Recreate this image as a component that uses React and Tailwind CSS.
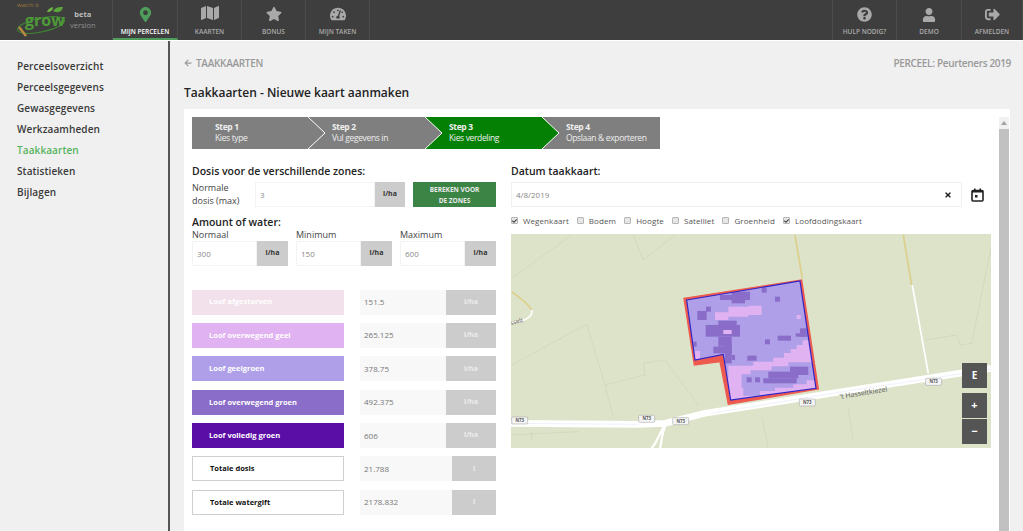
import { FaMapMarkerAlt, FaMap, FaStar, FaTachometerAlt, FaQuestionCircle, FaUser, FaSignOutAlt, FaArrowLeft, FaTimes, FaCheck } from 'react-icons/fa'

const leftNav = [
  { label: 'MIJN PERCELEN', icon: FaMapMarkerAlt, size: 15, active: true, w: 'w-[65px]' },
  { label: 'KAARTEN', icon: FaMap, size: 18, w: 'w-[64px]' },
  { label: 'BONUS', icon: FaStar, size: 16, w: 'w-[64px]' },
  { label: 'MIJN TAKEN', icon: FaTachometerAlt, size: 16, w: 'w-[64px]' },
]

const rightNav = [
  { label: 'HULP NODIG?', icon: FaQuestionCircle, size: 15, w: 'w-[64px]' },
  { label: 'DEMO', icon: FaUser, size: 14, w: 'w-[65px]' },
  { label: 'AFMELDEN', icon: FaSignOutAlt, size: 15, w: 'w-[61px]' },
]

const sideItems = ['Perceelsoverzicht', 'Perceelsgegevens', 'Gewasgegevens', 'Werkzaamheden', 'Taakkaarten', 'Statistieken', 'Bijlagen']

const steps = [
  { title: 'Step 1', text: 'Kies type', bg: 'bg-[#7f7f7f]', fill: '#7f7f7f' },
  { title: 'Step 2', text: 'Vul gegevens in', bg: 'bg-[#7f7f7f]', fill: '#7f7f7f' },
  { title: 'Step 3', text: 'Kies verdeling', bg: 'bg-[#048004]', fill: '#048004' },
  { title: 'Step 4', text: 'Opslaan & exporteren', bg: 'bg-[#7f7f7f]' },
]

const zones = [
  { label: 'Loof afgestorven', value: '151.5', color: 'bg-[#f2e0ea]', unit: 'l/ha' },
  { label: 'Loof overwegend geel', value: '265.125', color: 'bg-[#e0b2f2]', unit: 'l/ha' },
  { label: 'Loof geelgroen', value: '378.75', color: 'bg-[#ae9fe8]', unit: 'l/ha' },
  { label: 'Loof overwegend groen', value: '492.375', color: 'bg-[#8a6cc9]', unit: 'l/ha' },
  { label: 'Loof volledig groen', value: '606', color: 'bg-[#5b0ea6]', unit: 'l/ha' },
]

const layers = [
  { label: 'Wegenkaart', on: true },
  { label: 'Bodem' },
  { label: 'Hoogte' },
  { label: 'Satelliet' },
  { label: 'Groenheid' },
  { label: 'Loofdodingskaart', on: true },
]

function NavItem({ item }) {
  const Icon = item.icon
  return (
    <div className={`${item.w} h-full flex flex-col items-center border-r border-[#4c4c4c] ${item.active ? 'border-b-2 border-b-[#4f9d5a]' : ''}`}>
      <div className="h-[22px] flex items-end">
        <Icon size={item.size} className={item.active ? 'text-[#4f9d5a]' : 'text-[#a9a9a9]'} />
      </div>
      <span className={`mt-[5px] text-[6.5px] font-semibold leading-[9px] whitespace-nowrap ${item.active ? 'text-white' : 'text-[#a9a9a9]'}`}>{item.label}</span>
    </div>
  )
}

function Logo() {
  return (
    <div className="w-[113px] h-full flex items-center border-r border-[#4c4c4c] pl-[15px]">
      <div className="relative w-[52px] h-[36px]">
        <svg width="52" height="36" viewBox="0 0 52 36" className="absolute left-0 top-0">
          <ellipse cx="26" cy="23" rx="24" ry="7" fill="none" stroke="#3f8a35" strokeWidth="1" transform="rotate(-12 26 23)" />
          <path d="M38 9c3-4 6-4 10-4-1 4-4 7-10 4z" fill="#5aa53c" />
          <path d="M32 10c1-3 3-4 6-5 0 3-2 5-6 5z" fill="#6fb544" />
          <path d="M4 25l7 9" stroke="#b98a3f" strokeWidth="2.5" />
        </svg>
        <span className="absolute left-[2px] top-[-1px] text-[6px] leading-[8px] text-[#9c7a3a]">watch it</span>
        <span className="absolute left-[10px] top-[10px] text-[16px] leading-[16px] font-bold text-[#4e9a38]">grow</span>
      </div>
      <div className="ml-[3px] flex flex-col items-center text-[7.5px] leading-[11px]">
        <span className="font-bold text-[#bdbdbd]">beta</span>
        <span className="text-[#8f8f8f]">version</span>
      </div>
    </div>
  )
}

function Input({ value, unit, inputW, unitW }) {
  return (
    <div className="flex h-[25px]">
      <div className={`${inputW} border border-[#f3f3f3] flex items-center pl-[4px] text-[8px] text-[#8a8a8a]`}>{value}</div>
      <div className={`${unitW} bg-[#cccccc] flex items-center justify-center text-[7px] font-bold text-[#333]`}>{unit}</div>
    </div>
  )
}

function ZoneRow({ label, value, unit, color, total }) {
  return (
    <div className="flex h-[25px] mb-[8.4px]">
      <div className={`w-[152px] flex items-center pl-[17px] text-[7.5px] font-bold ${total ? 'bg-white border border-[#cfcfcf] text-[#111]' : `${color} text-white`}`}>{label}</div>
      <div className={`ml-[16px] ${total ? 'w-[92px]' : 'w-[86px]'} bg-[#f8f8f8] flex items-center pl-[4px] text-[8px] text-[#777]`}>{value}</div>
      <div className={`${total ? 'w-[44px]' : 'w-[50px]'} bg-[#cccccc] flex items-center justify-center text-[7px] font-bold text-[#ececec]`}>{unit}</div>
    </div>
  )
}

function Shield({ x, y }) {
  return (
    <g>
      <rect x={x} y={y} width="48" height="21" rx="3" fill="#f4f4f4" stroke="#9a9a9a" strokeWidth="1.5" />
      <text x={x + 24} y={y + 15} textAnchor="middle" fontSize="13" fontWeight="700" fill="#555">N73</text>
    </g>
  )
}

function MapSvg() {
  const dark = [
    [180, 90, 90, 15], [215, 80, 55, 15], [215, 100, 40, 15], [305, 68, 15, 15], [345, 95, 15, 15],
    [112, 138, 28, 27], [138, 125, 15, 15], [137, 180, 103, 35], [175, 167, 55, 15], [175, 215, 40, 30],
    [160, 245, 55, 20], [195, 235, 20, 60], [215, 270, 10, 15], [100, 230, 10, 15], [315, 223, 15, 15],
    [353, 212, 40, 15], [262, 272, 28, 15], [407, 205, 35, 10], [420, 190, 20, 25],
    [260, 337, 15, 15], [285, 337, 15, 15], [310, 340, 100, 15], [325, 320, 90, 20], [390, 305, 55, 25],
  ]
  const outline = '80,105 420,48 468,370 212,405 190,268 105,285'
  return (
    <svg viewBox="511 234 480 214" className="w-full h-full block">
      <rect x="511" y="234" width="480" height="214" fill="#dde3c9" />
      {/* roads and field lines, coords taken from the 3x crop */}
      <g transform="translate(505 235) scale(.3333)">
        <g fill="none" stroke="#cdd5b4" strokeWidth="2">
          <path d="M20 390 L245 268 L300 450 L420 420 L415 385 L480 375 L580 510" />
          <path d="M20 130 L200 0 M385 0 L415 75 L510 0" />
          <path d="M1260 315 L1355 300 L1365 330 L1400 325 L1458 40" />
          <path d="M300 450 L325 550 M770 540 L790 640 M1030 520 L1045 620" />
          <path d="M20 600 L220 590 M80 615 L80 590" />
        </g>
        <path d="M870 0 L892 130 M1195 0 L1220 150" fill="none" stroke="#dccf8a" strokeWidth="5" />
        <path d="M20 170 C45 190 70 205 80 225" fill="none" stroke="#dccf8a" strokeWidth="5" />
        <path d="M1222 150 L1270 415" fill="none" stroke="#ffffff" strokeWidth="5" />
        <path d="M20 262 C60 260 85 245 80 225" fill="none" stroke="#ffffff" strokeWidth="5" />
        <path d="M18 565 L400 568 L480 565 L600 535 L1000 472 L1458 400" fill="none" stroke="#ffffff" strokeWidth="20" />
        <path d="M18 565 L400 568 M620 535 L1000 472 L1458 403" fill="none" stroke="#dfe2ee" strokeWidth="1.5" />
        <path d="M480 570 C465 590 460 615 440 640 M480 575 C470 600 470 620 465 640" fill="none" stroke="#ffffff" strokeWidth="7" />
        <Shield x={20} y={546} />
        <Shield x={401} y={541} />
        <Shield x={503} y={548} />
        <Shield x={883} y={492} />
        <Shield x={1262} y={430} />
        <text x="1005" y="492" fontSize="21" fill="#555" transform="rotate(-9 1005 492)">'t Hasseltkiezel</text>
        <text x="18" y="270" fontSize="18" fill="#555" transform="rotate(-14 18 270)">sselt</text>
      </g>
      {/* field with zones, coords from the other crop */}
      <g transform="translate(660 265) scale(.3333)">
        <clipPath id="field">
          <polygon points={outline} />
        </clipPath>
        <polygon points="72,100 425,45 475,372 205,418 180,290 103,300" fill="#ee5a4f" stroke="#ee5a4f" strokeWidth="4" />
        <polygon points={outline} fill="#ae9fe8" />
        <g clipPath="url(#field)">
          <polygon points="205,302 280,302 280,290 340,290 340,278 372,278 372,264 392,264 392,252 410,252 410,240 428,240 428,226 445,226 480,226 480,420 205,420" fill="#e0b2f2" />
          <polygon points="272,328 272,316 335,316 335,304 385,304 385,292 470,292 470,346 440,346 440,358 400,358 400,368 345,368 345,378 300,378 300,392 250,392 250,368 245,368 245,328" fill="#ae9fe8" />
          <polygon points="165,165 165,142 205,142 205,125 265,125 265,122 305,122 305,150 265,150 265,155 205,155 205,165" fill="#e0b2f2" />
          {dark.map(([x, y, w, h], i) => (
            <rect key={i} x={x} y={y} width={w} height={h} fill="#8a6cc9" />
          ))}
          <rect x="410" y="150" width="12" height="12" fill="#e0b2f2" />
          <rect x="190" y="195" width="25" height="12" fill="#e0b2f2" />
          <rect x="105" y="258" width="15" height="25" fill="#e0b2f2" />
        </g>
        <polygon points={outline} fill="none" stroke="#2c24c8" strokeWidth="3.5" />
      </g>
    </svg>
  )
}

export default function App() {
  return (
    <div className="w-[1023px] h-[531px] overflow-hidden bg-[#f0f0f0] text-[#333] font-['Open_Sans',sans-serif]">
      <header className="h-[41px] bg-[#3e3e3e] border-b border-white flex justify-between">
        <div className="flex h-full">
          <Logo />
          {leftNav.map(item => <NavItem key={item.label} item={item} />)}
        </div>
        <div className="flex h-full border-l border-[#4c4c4c]">
          {rightNav.map(item => <NavItem key={item.label} item={item} />)}
        </div>
      </header>

      <div className="flex h-[490px]">
        <aside className="w-[170px] shrink-0 border-r-2 border-[#555] pt-[15px] pl-[17px]">
          {sideItems.map(item => (
            <div key={item} className={`h-[21px] flex items-center text-[10px] font-semibold tracking-[0.1px] ${item === 'Taakkaarten' ? 'text-[#55b35b]' : 'text-[#3a3a3a]'}`}>{item}</div>
          ))}
        </aside>

        <main className="w-[853px] pl-[14px] pr-[12px]">
          <div className="h-[68px] relative">
            <div className="flex justify-between items-center h-[44px]">
              <div className="flex items-center gap-[4px] text-[10px] font-semibold tracking-[-0.3px] text-[#999]">
                <FaArrowLeft size={8} />
                <span>TAAKKAARTEN</span>
              </div>
              <span className="text-[10px] font-semibold tracking-[-0.33px] text-[#999]">PERCEEL: Peurteners 2019</span>
            </div>
            <h1 className="text-[12px] font-semibold leading-[18px] text-[#222] mt-[-1px]">Taakkaarten - Nieuwe kaart aanmaken</h1>
          </div>

          <section className="h-[422px] w-[826px] bg-white flex pl-[8px] pt-[8px] relative">
            <div className="w-[807px]">
              <div className="flex w-[468px] h-[32px]">
                {steps.map(s => (
                  <div key={s.title} className={`${s.bg} relative flex-1 pl-[23px] pt-[4px] text-[8.5px] leading-[11px] tracking-[-0.35px] text-[#eeeeee]`}>
                    <div className="font-bold">{s.title}</div>
                    <div className="whitespace-nowrap">{s.text}</div>
                    {s.fill && (
                      <svg width="18" height="32" viewBox="0 0 18 32" className="absolute top-0 right-[-17px] z-10">
                        <polygon points="0,0 17,16 0,32" fill={s.fill} />
                        <polyline points="0,0 17,16 0,32" fill="none" stroke="#ffffff" strokeWidth="1" />
                      </svg>
                    )}
                  </div>
                ))}
              </div>

              <div className="flex mt-[15px]">
                <div className="w-[304px]">
                  <h2 className="text-[10.5px] font-semibold leading-[14px] text-[#222] mb-[4px]">Dosis voor de verschillende zones:</h2>
                  <div className="flex">
                    <div className="w-[63px] text-[9px] leading-[12.5px] text-[#444]">Normale<br />dosis (max)</div>
                    <Input value="3" unit="l/ha" inputW="w-[120px]" unitW="w-[30px]" />
                    <div className="ml-[8px] w-[83px] h-[25px] bg-[#3c8445] flex items-center justify-center text-center text-[6.5px] leading-[11px] font-bold text-[#eaeaea]">BEREKEN VOOR<br />DE ZONES</div>
                  </div>
                  <h2 className="mt-[8px] text-[10.5px] font-semibold leading-[14px] text-[#222]">Amount of water:</h2>
                  <div className="flex gap-[8px]">
                    {[['Normaal', '300'], ['Minimum', '150'], ['Maximum', '600']].map(([label, value]) => (
                      <div key={label}>
                        <div className="text-[9px] leading-[12px] text-[#444]">{label}</div>
                        <Input value={value} unit="l/ha" inputW="w-[65px]" unitW="w-[31px]" />
                      </div>
                    ))}
                  </div>
                  <div className="mt-[23.5px]">
                    {zones.map(z => <ZoneRow key={z.label} {...z} />)}
                    <ZoneRow label="Totale dosis" value="21.788" unit="l" total />
                    <ZoneRow label="Totale watergift" value="2178.832" unit="l" total />
                  </div>
                </div>

                <div className="ml-[15px] w-[480px]">
                  <h2 className="text-[10.5px] font-semibold leading-[14px] text-[#222] mb-[4px]">Datum taakkaart:</h2>
                  <div className="flex items-center">
                    <div className="w-[451px] h-[25px] border border-[#f0f0f0] flex items-center justify-between pl-[4px] pr-[9px] text-[8px] text-[#888]">
                      <span>4/8/2019</span>
                      <FaTimes size={8} className="text-[#222]" />
                    </div>
                    <svg width="13" height="14" viewBox="0 0 13 14" className="ml-[9px]">
                      <rect x="1" y="2.5" width="11" height="10.5" rx="1" fill="none" stroke="#222" strokeWidth="1.6" />
                      <rect x="1" y="2" width="11" height="2.5" fill="#222" />
                      <rect x="3" y="0.5" width="1.6" height="2.5" fill="#222" />
                      <rect x="8.4" y="0.5" width="1.6" height="2.5" fill="#222" />
                      <rect x="4" y="7" width="2.5" height="2.5" fill="#222" />
                    </svg>
                  </div>
                  <div className="flex gap-[8px] h-[27px] items-center text-[8px] tracking-[0.1px] text-[#555]">
                    {layers.map(l => (
                      <div key={l.label} className="flex items-center gap-[5px]">
                        <span className="w-[7px] h-[7px] bg-[#e6e6e6] border border-[#b5b5b5] rounded-[1px] flex items-center justify-center">
                          {l.on && <FaCheck size={6} className="text-[#333]" />}
                        </span>
                        <span>{l.label}</span>
                      </div>
                    ))}
                  </div>
                  <div className="relative w-[480px] h-[214px]">
                    <MapSvg />
                    <div className="absolute left-[451px] top-[129px] w-[25px] h-[25px] bg-[#555] flex items-center justify-center text-[10px] font-bold text-white">E</div>
                    <div className="absolute left-[451px] top-[159px] w-[25px] h-[25px] bg-[#555] flex items-center justify-center text-[11px] font-bold text-white">+</div>
                    <div className="absolute left-[451px] top-[185px] w-[25px] h-[25px] bg-[#555] flex items-center justify-center text-[11px] font-bold text-white">−</div>
                  </div>
                </div>
              </div>
            </div>
            <div className="w-[10px] h-full bg-[#f1f1f1] flex flex-col items-center">
              <div className="h-[12px] flex items-center">
                <svg width="6" height="4" viewBox="0 0 6 4"><polygon points="3,0 6,4 0,4" fill="#a3a3a3" /></svg>
              </div>
              <div className="w-full flex-1 bg-[#c1c1c1]" />
            </div>
          </section>
        </main>
      </div>
    </div>
  )
}
